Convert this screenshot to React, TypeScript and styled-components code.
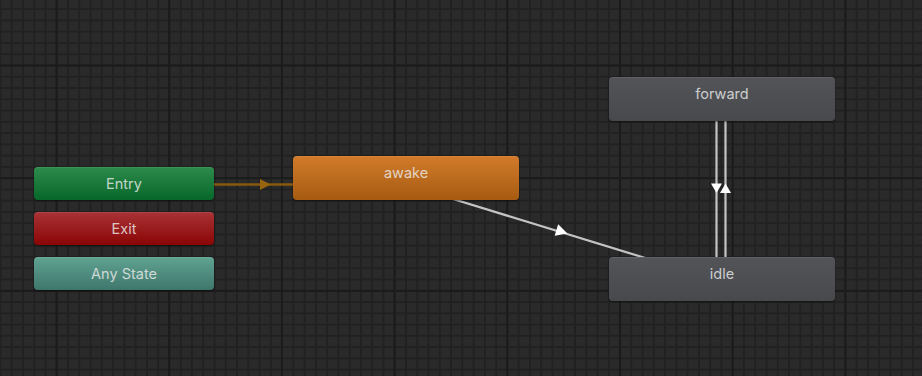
import styled, { createGlobalStyle, css } from 'styled-components';

const GlobalStyle = createGlobalStyle`
  html, body {
    margin: 0;
    padding: 0;
    background: #282828;
  }
  body {
    font-family: Inter, "Noto Sans", "Liberation Sans", sans-serif;
  }
`;

const Canvas = styled.div`
  position: relative;
  width: 922px;
  height: 376px;
  overflow: hidden;
  background-color: #2a2a2a;
  background-image:
    linear-gradient(to right, #1b1b1b 2px, transparent 2px),
    linear-gradient(to bottom, #1b1b1b 2px, transparent 2px),
    linear-gradient(to right, #212121 1.5px, transparent 1.5px),
    linear-gradient(to bottom, #212121 1.5px, transparent 1.5px);
  background-size: 112.7px 112.7px, 112.7px 112.7px, 11.27px 11.27px, 11.27px 11.27px;
  background-position: 55.5px 64.5px, 55.5px 64.5px, -0.5px 8.2px, -0.5px 8.2px;
`;

const Edges = styled.svg`
  position: absolute;
  inset: 0;
  pointer-events: none;
`;

type Tone = 'entry' | 'exit' | 'any' | 'default' | 'state';

const tones: Record<Tone, string> = {
  entry: 'linear-gradient(to bottom, #2d8b4b, #07672a)',
  exit: 'linear-gradient(to bottom, #a83336, #8b0505)',
  any: 'linear-gradient(to bottom, #60a391, #3f766c)',
  default: 'linear-gradient(to bottom, #d27b2a, #a65b12)',
  state: 'linear-gradient(to bottom, #525458, #47494d)',
};

const Node = styled.div<{ $tone: Tone; $large?: boolean }>`
  position: absolute;
  box-sizing: border-box;
  display: flex;
  justify-content: center;
  border-radius: 4px;
  background: ${({ $tone }) => tones[$tone]};
  box-shadow: inset 0 1px 0 rgba(255, 255, 255, 0.08), 0 1px 2px rgba(0, 0, 0, 0.45);
  color: rgba(235, 235, 235, 0.82);
  font-size: 14.5px;
  line-height: 18px;
  ${({ $large }) =>
    $large
      ? css`
          width: 226px;
          height: 44px;
          align-items: flex-start;
          padding-top: 8px;
        `
      : css`
          width: 180px;
          height: 33px;
          align-items: center;
        `}
`;

const nodes: { label: string; tone: Tone; large?: boolean; x: number; y: number }[] = [
  { label: 'Entry', tone: 'entry', x: 34, y: 167 },
  { label: 'Exit', tone: 'exit', x: 34, y: 212 },
  { label: 'Any State', tone: 'any', x: 34, y: 257 },
  { label: 'awake', tone: 'default', large: true, x: 293, y: 156 },
  { label: 'forward', tone: 'state', large: true, x: 609, y: 77 },
  { label: 'idle', tone: 'state', large: true, x: 609, y: 257 },
];

export default function App() {
  return (
    <>
      <GlobalStyle />
      <Canvas>
        <Edges width={922} height={376} viewBox="0 0 922 376">
          {/* entry -> awake */}
          <line x1={214} y1={184.5} x2={293} y2={184.5} stroke="#87590d" strokeWidth={2.5} />
          <polygon points="260,179 260,190 270.5,184.5" fill="#98650f" />

          {/* awake -> idle */}
          <line x1={440} y1={195} x2={655} y2={261} stroke="#c4c4c4" strokeWidth={2.2} />
          <polygon points="-10,-6 1.5,0 -10,6" fill="#ffffff" transform="translate(566 233) rotate(16.9)" />

          {/* forward <-> idle */}
          <line x1={716.5} y1={121} x2={716.5} y2={257} stroke="#c4c4c4" strokeWidth={2.2} />
          <line x1={725.5} y1={121} x2={725.5} y2={257} stroke="#c4c4c4" strokeWidth={2.2} />
          <polygon points="711,183.5 722,183.5 716.5,193" fill="#ffffff" />
          <polygon points="720,193 731,193 725.5,183.5" fill="#ffffff" />
        </Edges>
        {nodes.map((n) => (
          <Node key={n.label} $tone={n.tone} $large={n.large} style={{ left: n.x, top: n.y }}>
            {n.label}
          </Node>
        ))}
      </Canvas>
    </>
  );
}
